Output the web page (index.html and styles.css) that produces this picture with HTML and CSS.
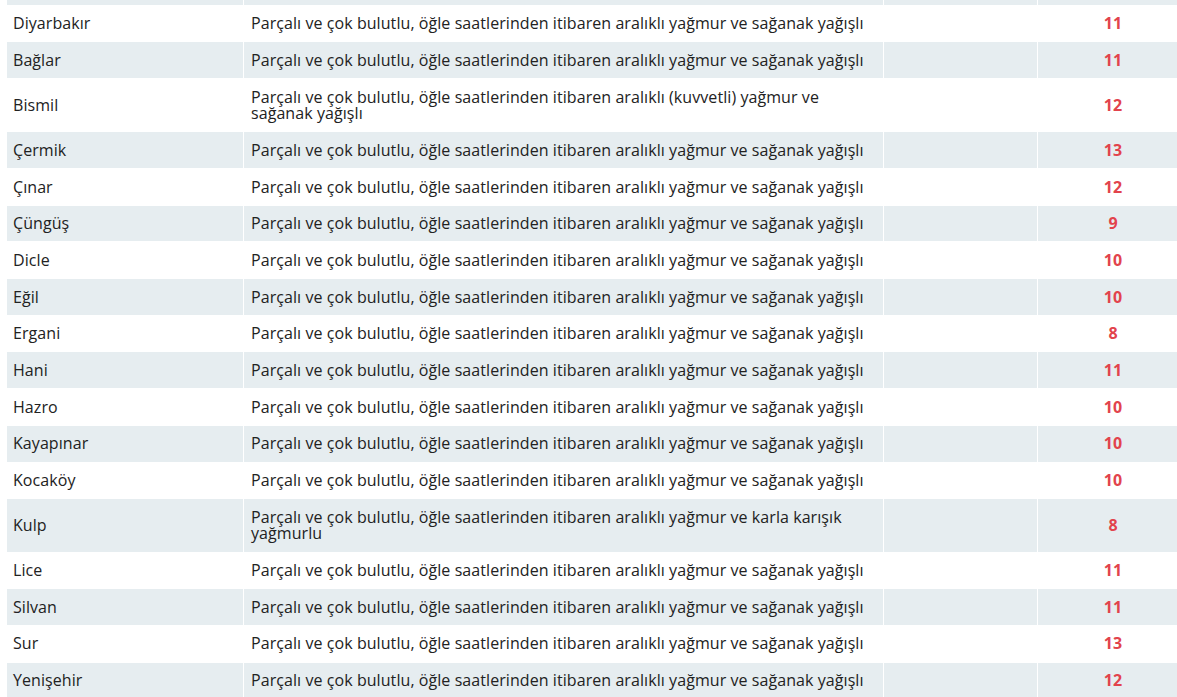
FILE: index.html
```html
<!DOCTYPE html>
<html lang="tr">
<head>
<meta charset="utf-8">
<title>Diyarbakır hava durumu</title>
<link rel="stylesheet" href="styles.css">
</head>
<body>
<table class="forecast">
  <colgroup>
    <col class="c-name">
    <col class="c-desc">
    <col class="c-mid">
    <col class="c-temp">
  </colgroup>
  <tbody>
    <tr class="alt head"><td>&nbsp;</td><td>&nbsp;</td><td>&nbsp;</td><td class="temp">&nbsp;</td></tr>
    <tr><td>Diyarbakır</td><td>Parçalı ve çok bulutlu, öğle saatlerinden itibaren aralıklı yağmur ve sağanak yağışlı</td><td></td><td class="temp">11</td></tr>
    <tr class="alt"><td>Bağlar</td><td>Parçalı ve çok bulutlu, öğle saatlerinden itibaren aralıklı yağmur ve sağanak yağışlı</td><td></td><td class="temp">11</td></tr>
    <tr><td>Bismil</td><td>Parçalı ve çok bulutlu, öğle saatlerinden itibaren aralıklı (kuvvetli) yağmur ve sağanak yağışlı</td><td></td><td class="temp">12</td></tr>
    <tr class="alt"><td>Çermik</td><td>Parçalı ve çok bulutlu, öğle saatlerinden itibaren aralıklı yağmur ve sağanak yağışlı</td><td></td><td class="temp">13</td></tr>
    <tr><td>Çınar</td><td>Parçalı ve çok bulutlu, öğle saatlerinden itibaren aralıklı yağmur ve sağanak yağışlı</td><td></td><td class="temp">12</td></tr>
    <tr class="alt"><td>Çüngüş</td><td>Parçalı ve çok bulutlu, öğle saatlerinden itibaren aralıklı yağmur ve sağanak yağışlı</td><td></td><td class="temp">9</td></tr>
    <tr><td>Dicle</td><td>Parçalı ve çok bulutlu, öğle saatlerinden itibaren aralıklı yağmur ve sağanak yağışlı</td><td></td><td class="temp">10</td></tr>
    <tr class="alt"><td>Eğil</td><td>Parçalı ve çok bulutlu, öğle saatlerinden itibaren aralıklı yağmur ve sağanak yağışlı</td><td></td><td class="temp">10</td></tr>
    <tr><td>Ergani</td><td>Parçalı ve çok bulutlu, öğle saatlerinden itibaren aralıklı yağmur ve sağanak yağışlı</td><td></td><td class="temp">8</td></tr>
    <tr class="alt"><td>Hani</td><td>Parçalı ve çok bulutlu, öğle saatlerinden itibaren aralıklı yağmur ve sağanak yağışlı</td><td></td><td class="temp">11</td></tr>
    <tr><td>Hazro</td><td>Parçalı ve çok bulutlu, öğle saatlerinden itibaren aralıklı yağmur ve sağanak yağışlı</td><td></td><td class="temp">10</td></tr>
    <tr class="alt"><td>Kayapınar</td><td>Parçalı ve çok bulutlu, öğle saatlerinden itibaren aralıklı yağmur ve sağanak yağışlı</td><td></td><td class="temp">10</td></tr>
    <tr><td>Kocaköy</td><td>Parçalı ve çok bulutlu, öğle saatlerinden itibaren aralıklı yağmur ve sağanak yağışlı</td><td></td><td class="temp">10</td></tr>
    <tr class="alt"><td>Kulp</td><td>Parçalı ve çok bulutlu, öğle saatlerinden itibaren aralıklı yağmur ve karla karışık yağmurlu</td><td></td><td class="temp">8</td></tr>
    <tr><td>Lice</td><td>Parçalı ve çok bulutlu, öğle saatlerinden itibaren aralıklı yağmur ve sağanak yağışlı</td><td></td><td class="temp">11</td></tr>
    <tr class="alt"><td>Silvan</td><td>Parçalı ve çok bulutlu, öğle saatlerinden itibaren aralıklı yağmur ve sağanak yağışlı</td><td></td><td class="temp">11</td></tr>
    <tr><td>Sur</td><td>Parçalı ve çok bulutlu, öğle saatlerinden itibaren aralıklı yağmur ve sağanak yağışlı</td><td></td><td class="temp">13</td></tr>
    <tr class="alt"><td>Yenişehir</td><td>Parçalı ve çok bulutlu, öğle saatlerinden itibaren aralıklı yağmur ve sağanak yağışlı</td><td></td><td class="temp">12</td></tr>
  </tbody>
</table>
</body>
</html>
```

FILE: styles.css
```css
html {
  overflow: hidden;
}

body {
  margin: 0;
  padding: 0 0 0 7px;
  background: #ffffff;
  font-family: "Open Sans", "Liberation Sans", sans-serif;
  font-size: 16px;
  letter-spacing: 0.07px;
  color: #222222;
}

.forecast {
  width: 1182px;
  margin-top: -31px;
  table-layout: fixed;
  border-collapse: separate;
  border-spacing: 0;
}

.c-name { width: 237px; }
.c-desc { width: 640px; }
.c-mid  { width: 154px; }
.c-temp { width: 151px; }

.forecast td {
  padding: 9.55px 6px 9.55px 6px;
  line-height: 16.6px;
  vertical-align: middle;
  border-right: 1px solid #ffffff;
  border-bottom: 1px solid #ffffff;
  background: #ffffff;
}

.forecast td:nth-child(2) {
  padding-left: 7px;
}

.forecast tr.alt td {
  background: #e6edf0;
}

.forecast td.temp {
  text-align: center;
  font-weight: 700;
  color: #e2434c;
}
```
